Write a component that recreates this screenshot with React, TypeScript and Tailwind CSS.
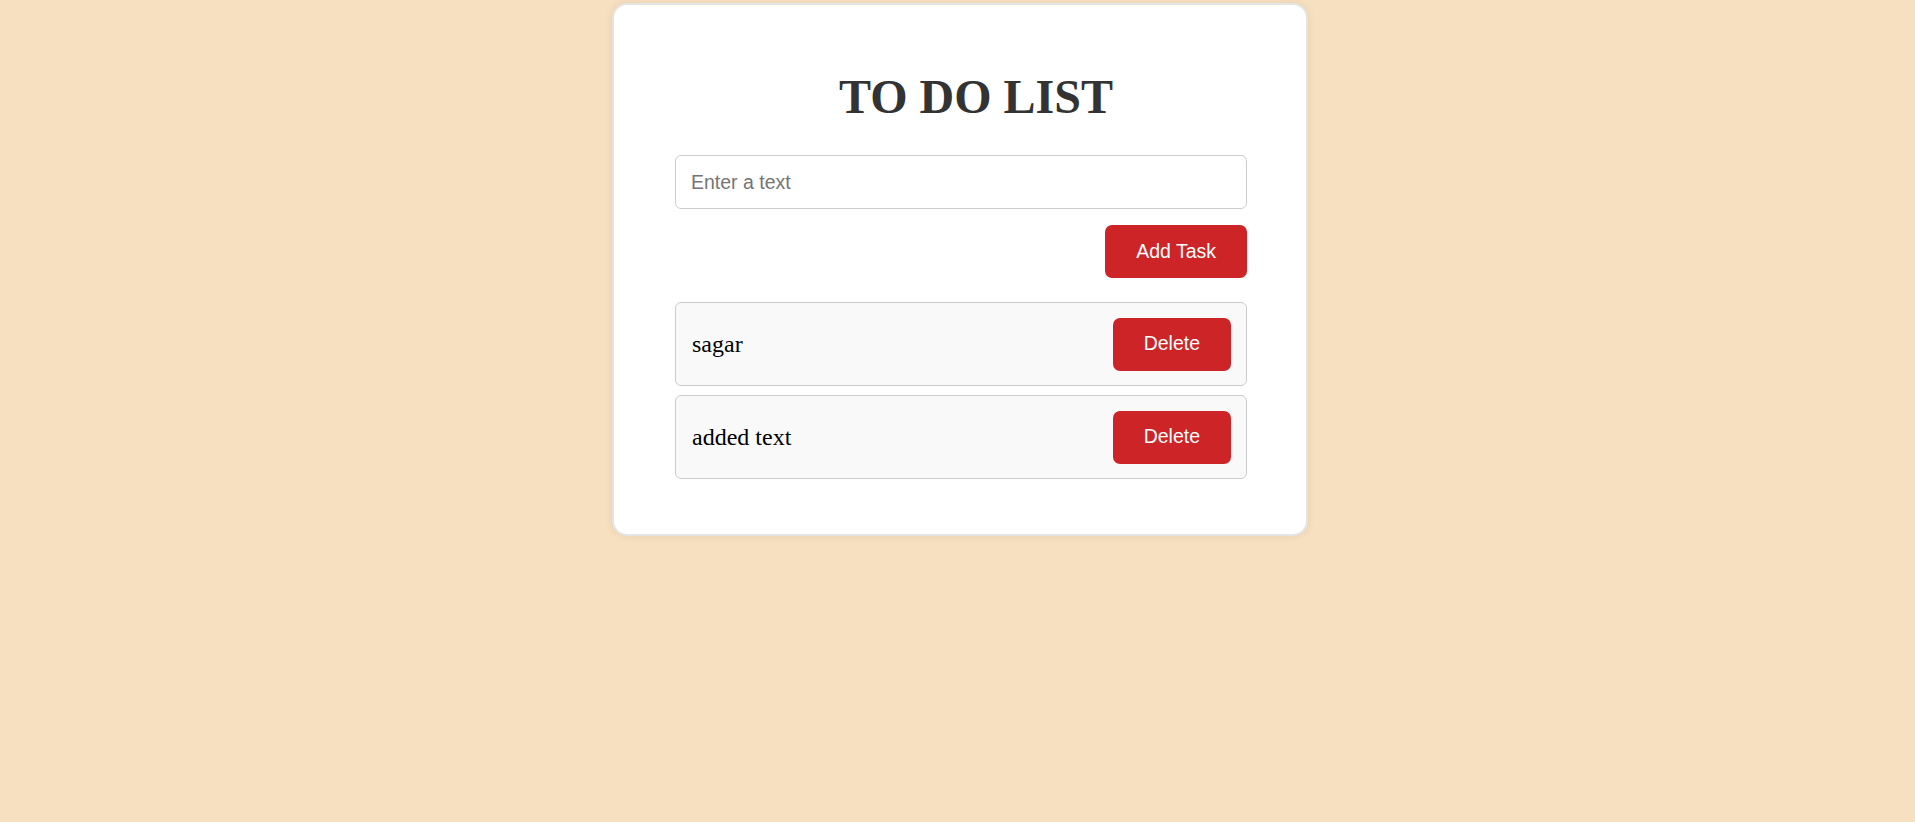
import { useState } from 'react'

interface Task {
  id: number
  text: string
}

export default function App() {
  const [text, setText] = useState('')
  const [tasks, setTasks] = useState<Task[]>([
    { id: 1, text: 'sagar' },
    { id: 2, text: 'added text' },
  ])

  const addTask = () => {
    if (!text.trim()) return
    setTasks([...tasks, { id: Date.now(), text }])
    setText('')
  }

  const deleteTask = (id: number) => {
    setTasks(tasks.filter(t => t.id !== id))
  }

  return (
    <div className="min-h-screen bg-[#f7e0bf] pt-[3px] pl-[5px] flex justify-center items-start">
      <div className="w-[696px] bg-white border-2 border-[#e4e4e4] rounded-[15px] shadow-[0_0_10px_rgba(0,0,0,0.07)] pl-[61px] pr-[59px] pt-[65px] pb-[55px]">
        {/* Title */}
        <h1 className="pl-[30px] text-center text-[48px] leading-[53px] font-bold text-[#333333] font-['Liberation_Serif','Times_New_Roman',serif]">
          TO DO LIST
        </h1>

        {/* Input */}
        <input
          type="text"
          value={text}
          onChange={e => setText(e.target.value)}
          placeholder="Enter a text"
          className="mt-[32px] block w-full h-[54px] border border-[#cccccc] rounded-[6px] px-[15px] text-[19.5px] text-[#333] placeholder:text-[#757575] outline-none font-['Liberation_Sans',Arial,sans-serif]"
        />

        <div className="mt-[16px] flex justify-end">
          <button
            onClick={addTask}
            className="h-[53px] px-[31px] rounded-[7px] bg-[#cc2427] text-white text-[19.5px] font-['Liberation_Sans',Arial,sans-serif]"
          >
            Add Task
          </button>
        </div>

        {/* Tasks */}
        <ul className="mt-[24px] flex flex-col gap-[9px]">
          {tasks.map(task => (
            <li
              key={task.id}
              className="flex items-center justify-between h-[84px] border border-[#cccccc] rounded-[6px] bg-[#f9f9f9] pl-[16px] pr-[15px]"
            >
              <span className="text-[24px] text-black font-['Liberation_Serif','Times_New_Roman',serif]">
                {task.text}
              </span>
              <button
                onClick={() => deleteTask(task.id)}
                className="h-[53px] px-[31px] rounded-[7px] bg-[#cc2427] text-white text-[19.5px] font-['Liberation_Sans',Arial,sans-serif]"
              >
                Delete
              </button>
            </li>
          ))}
        </ul>
      </div>
    </div>
  )
}
